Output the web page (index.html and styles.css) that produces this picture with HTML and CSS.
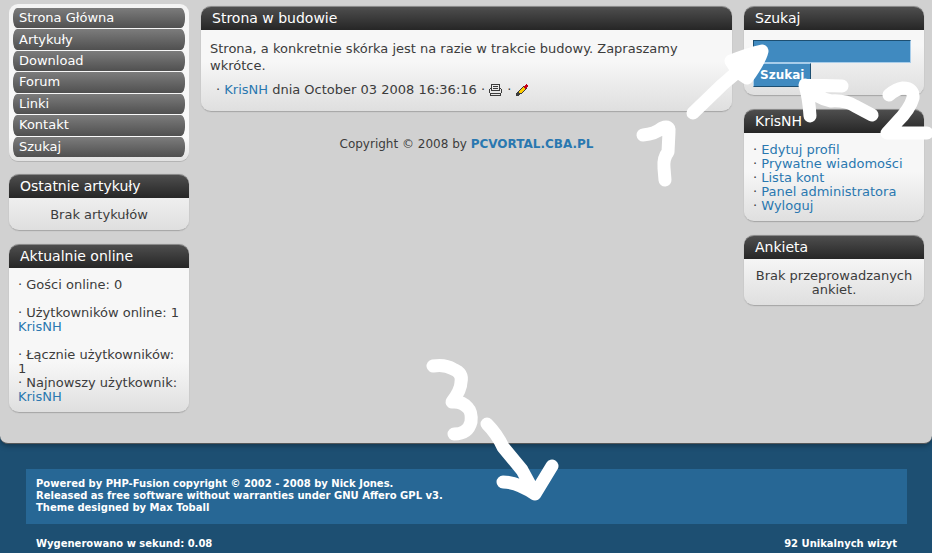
FILE: index.html
```html
<!DOCTYPE html>
<html lang="pl">
<head>
    <meta charset="UTF-8">
    <meta name="viewport" content="width=device-width, initial-scale=1.0">
    <title>Strona w budowie</title>
    <link rel="stylesheet" href="styles.css">
</head>
<body>
    <div class="page">
        <div class="side">
            <nav class="menu">
                <a href="#">Strona Główna</a>
                <a href="#">Artykuły</a>
                <a href="#">Download</a>
                <a href="#">Forum</a>
                <a href="#">Linki</a>
                <a href="#">Kontakt</a>
                <a href="#">Szukaj</a>
            </nav>

            <div class="panel">
                <h2>Ostatnie artykuły</h2>
                <div class="panel-body center">Brak artykułów</div>
            </div>

            <div class="panel">
                <h2>Aktualnie online</h2>
                <div class="panel-body">
                    · Gości online: 0<br>
                    <br>
                    · Użytkowników online: 1<br>
                    <a href="#">KrisNH</a><br>
                    <br>
                    · Łącznie użytkowników: 1<br>
                    · Najnowszy użytkownik: <a href="#">KrisNH</a>
                </div>
            </div>
        </div>

        <main class="content">
            <div class="panel">
                <h2>Strona w budowie</h2>
                <div class="panel-body news">
                    <p>Strona, a konkretnie skórka jest na razie w trakcie budowy. Zapraszamy wkrótce.</p>
                    <div class="news-info">
                        · <a href="#">KrisNH</a> dnia October 03 2008 16:36:16 ·
                        <a href="#" aria-label="Drukuj"><svg class="icon" width="14" height="12" viewBox="0 0 14 12" shape-rendering="crispEdges">
                            <path d="M2 0h9v1H2zM2 1h1v5H2zM10 1h1v5h-1zM4 2h5v1H4zM4 4h5v1H4zM1 4h1v1H1zM11 4h1v1h-1zM0 5h1v4H0zM12 5h1v4h-1zM2 6h9v1H2zM1 9h11v1H1zM1 10h1v1H1zM11 10h1v1h-1zM1 11h11v1H1z" fill="#3c3c3c"/>
                        </svg></a> ·
                        <a href="#" aria-label="Edytuj"><svg class="icon" width="12" height="12" viewBox="0 0 12 12" shape-rendering="crispEdges">
                            <path d="M0 12V9h1V8h1V7h1v2h2v1H4v1H3v1zM5 9h1V8h1V7h1V6h1V5h1V4h1v1h-1v1H9v1H8v1H7v1H6v1H5zM3 6h1V5h1V4h1V3h1V2h1v1H7v1H6v1H5v1H4v1H3z" fill="#3c3c3c"/>
                            <path d="M3 7h1V6h1V5h1V4h1V3h1v1h1v1h1v0H9v1H8v1H7v1H6v1H3z" fill="#fc0"/>
                            <path d="M8 2h1V1h1V0h1v1h1v2h-1v1h-1v1H9V4H8z" fill="#c4001a"/>
                        </svg></a>
                    </div>
                </div>
            </div>
            <p class="copyright">Copyright © 2008 by <a href="#">PCVORTAL.CBA.PL</a></p>
        </main>

        <div class="side">
            <div class="panel">
                <h2>Szukaj</h2>
                <form class="panel-body search">
                    <input type="text" name="stext" aria-label="Szukaj">
                    <button type="submit">Szukaj</button>
                </form>
            </div>

            <div class="panel">
                <h2>KrisNH</h2>
                <div class="panel-body">
                    · <a href="#">Edytuj profil</a><br>
                    · <a href="#">Prywatne wiadomości</a><br>
                    · <a href="#">Lista kont</a><br>
                    · <a href="#">Panel administratora</a><br>
                    · <a href="#">Wyloguj</a>
                </div>
            </div>

            <div class="panel">
                <h2>Ankieta</h2>
                <div class="panel-body center">Brak przeprowadzanych ankiet.</div>
            </div>
        </div>
    </div>

    <footer class="footer">
        <div class="powered">
            Powered by PHP-Fusion copyright © 2002 - 2008 by Nick Jones.<br>
            Released as free software without warranties under GNU Affero GPL v3.<br>
            Theme designed by Max Toball
        </div>
        <div class="stats">
            <span>Wygenerowano w sekund: 0.08</span>
            <span>92 Unikalnych wizyt</span>
        </div>
    </footer>

    <!-- hand-drawn marks 1, 2, 3 with arrows -->
    <svg class="marks" width="932" height="553" viewBox="0 0 932 553" aria-hidden="true">
        <path d="M643 135Q655 134 662 128Q670 125 669 132L668 152Q663 158 664 168L665 180"/>
        <path d="M693 113L722 85Q732 76 745 66"/>
        <path class="solid" d="M731 61Q748 54 762 51Q760 60 747 78L738 72z"/>
        <path d="M842 86L805 85Q809 98 810 116M805 85Q818 99 831 101Q845 100 855 106L872 115"/>
        <path d="M889 95Q896 89 903 88Q914 88 913 98Q910 109 897 122L887 133L927 133"/>
        <path d="M433 366Q445 364 453 369Q463 373 461 382Q461 390 452 402Q462 401 468 408Q472 412 471 422Q468 434 454 434"/>
        <path d="M487 424Q497 434 503 447L522 470L535 494M503 482Q517 482 535 494L552 466"/>
    </svg>
</body>
</html>
```

FILE: styles.css
```css
body {
    margin: 0;
    background-color: #1d4f72;
    color: #3c3c3c;
    font-family: Verdana, "DejaVu Sans", sans-serif;
    font-size: 13px;
    line-height: 14px;
}

a {
    color: #2a78b0;
    text-decoration: none;
}

.page {
    display: flex;
    align-items: flex-start;
    gap: 12px;
    padding: 6px 8px 30px 9px;
    background-color: #d1d1d1;
    border-bottom: 1px solid #55585a;
    border-radius: 0 0 8px 8px;
    box-shadow: 0 2px 5px #143850;
}

.side {
    display: flex;
    flex-direction: column;
    flex: 0 0 180px;
    gap: 13px;
}

.content {
    flex: 1;
}

/* left menu */
.menu {
    display: grid;
    grid-auto-rows: 1fr;
    gap: 1px;
    min-height: 149px;
    margin-top: -2px;
    padding: 4px;
    background: linear-gradient(#f4f4f4, #fafafa 85%, #e2e2e2);
    border-radius: 9px;
    box-shadow: 0 1px 0 #b4b4b4;
}

.menu a {
    display: flex;
    align-items: center;
    padding-left: 6px;
    background: linear-gradient(#7c7c7c, #505050);
    border-radius: 4px / 9px;
    color: #fff;
}

/* panels */
.panel {
    border-radius: 10px;
    box-shadow: 0 0 1px #999;
}

.panel h2 {
    margin: 0;
    padding: 0 11px;
    background: linear-gradient(#4e4e4e, #262626);
    border-top: 1px solid #8a8a8a;
    border-radius: 10px 10px 0 0;
    color: #fff;
    font-size: 14px;
    font-weight: normal;
    line-height: 23px;
}

.panel-body {
    padding: 10px 8px 8px 9px;
    background: #f7f7f7 linear-gradient(#f7f7f7, #dfdfdf) bottom / 100% 50px no-repeat;
    border-bottom: 1px solid #a9a9a9;
    border-radius: 0 0 10px 10px;
}

.center {
    padding: 10px 8px 8px;
    text-align: center;
}

.news {
    padding: 10px 9px 13px;
    line-height: 17px;
}

.news p {
    margin: 0 0 7px;
}

.news-info {
    padding-left: 6px;
}

.icon {
    vertical-align: -2px;
}

.copyright {
    margin: 25px 0 0;
    font-size: 12px;
    text-align: center;
}

.copyright a {
    font-weight: bold;
}

.search input {
    display: block;
    box-sizing: border-box;
    width: 158px;
    height: 23px;
    margin: 0;
    padding: 2px;
    background-color: #408ac0;
    border: 1px solid;
    border-color: #1d4f72 #a8cdea #a8cdea #1d4f72;
    color: #fff;
}

.search button {
    display: block;
    height: 24px;
    margin: 0;
    padding: 0 6px;
    background-color: #408ac0;
    border: 1px solid;
    border-color: #a8cdea #1d4f72 #1d4f72 #a8cdea;
    color: #fff;
    font-family: inherit;
    font-size: 12px;
    font-weight: bold;
}

/* footer */
.footer {
    padding: 25px 25px 3px 26px;
    color: #fff;
    font-size: 10px;
    font-weight: bold;
    line-height: 12px;
}

.powered {
    padding: 9px 10px 10px;
    background-color: #276795;
}

.stats {
    display: flex;
    justify-content: space-between;
    padding: 14px 10px 0;
}

.marks {
    position: absolute;
    top: 0;
    left: 0;
    fill: none;
    stroke: #fff;
    stroke-width: 13;
    stroke-linecap: round;
    stroke-linejoin: round;
    pointer-events: none;
}

.marks .solid {
    fill: #fff;
}
```
